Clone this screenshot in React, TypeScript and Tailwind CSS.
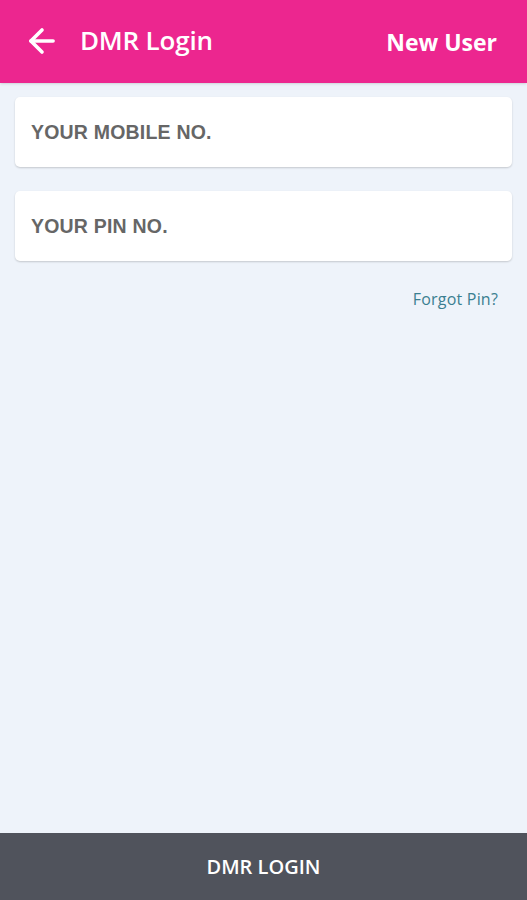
import { ArrowLeft } from "lucide-react";

export default function App() {
  return (
    <div className="flex flex-col h-[900px] w-full bg-[#eef3fa] font-['Open_Sans',sans-serif]">
      <div className="flex items-center justify-between h-[83px] bg-[#ec268f] pl-[23px] pr-[30px] shadow-sm">
        <div className="flex items-center gap-[19px] pb-[2px]">
          <ArrowLeft className="w-[38px] h-[38px] text-white" strokeWidth={2.3} />
          <p className="text-[26px] text-white font-semibold tracking-[-0.2px]">DMR Login</p>
        </div>
        <p className="text-[23px] text-white font-bold pt-[2px]">New User</p>
      </div>
      <div className="flex flex-col gap-[24px] px-[15px] pt-[14px] flex-1">
        <div className="flex items-center h-[70px] bg-white rounded-[5px] shadow-[0_1px_2px_rgba(0,0,0,0.18)] px-[16px] pt-[2px]">
          <p className="text-[19.5px] font-bold text-[#666] font-['Liberation_Sans',sans-serif] tracking-[0.2px]">YOUR MOBILE NO.</p>
        </div>
        <div className="flex items-center h-[70px] bg-white rounded-[5px] shadow-[0_1px_2px_rgba(0,0,0,0.18)] px-[16px] pt-[2px]">
          <p className="text-[19.5px] font-bold text-[#666] font-['Liberation_Sans',sans-serif] tracking-[0.2px]">YOUR PIN NO.</p>
        </div>
        <div className="flex justify-end pr-[14px] mt-[2px]">
          <p className="text-[16px] text-[#3b7f91] tracking-[0.2px]">Forgot Pin?</p>
        </div>
      </div>
      <div className="flex items-center justify-center h-[67px] bg-[#50535c]">
        <p className="text-[20px] text-white font-semibold">DMR LOGIN</p>
      </div>
    </div>
  );
}
